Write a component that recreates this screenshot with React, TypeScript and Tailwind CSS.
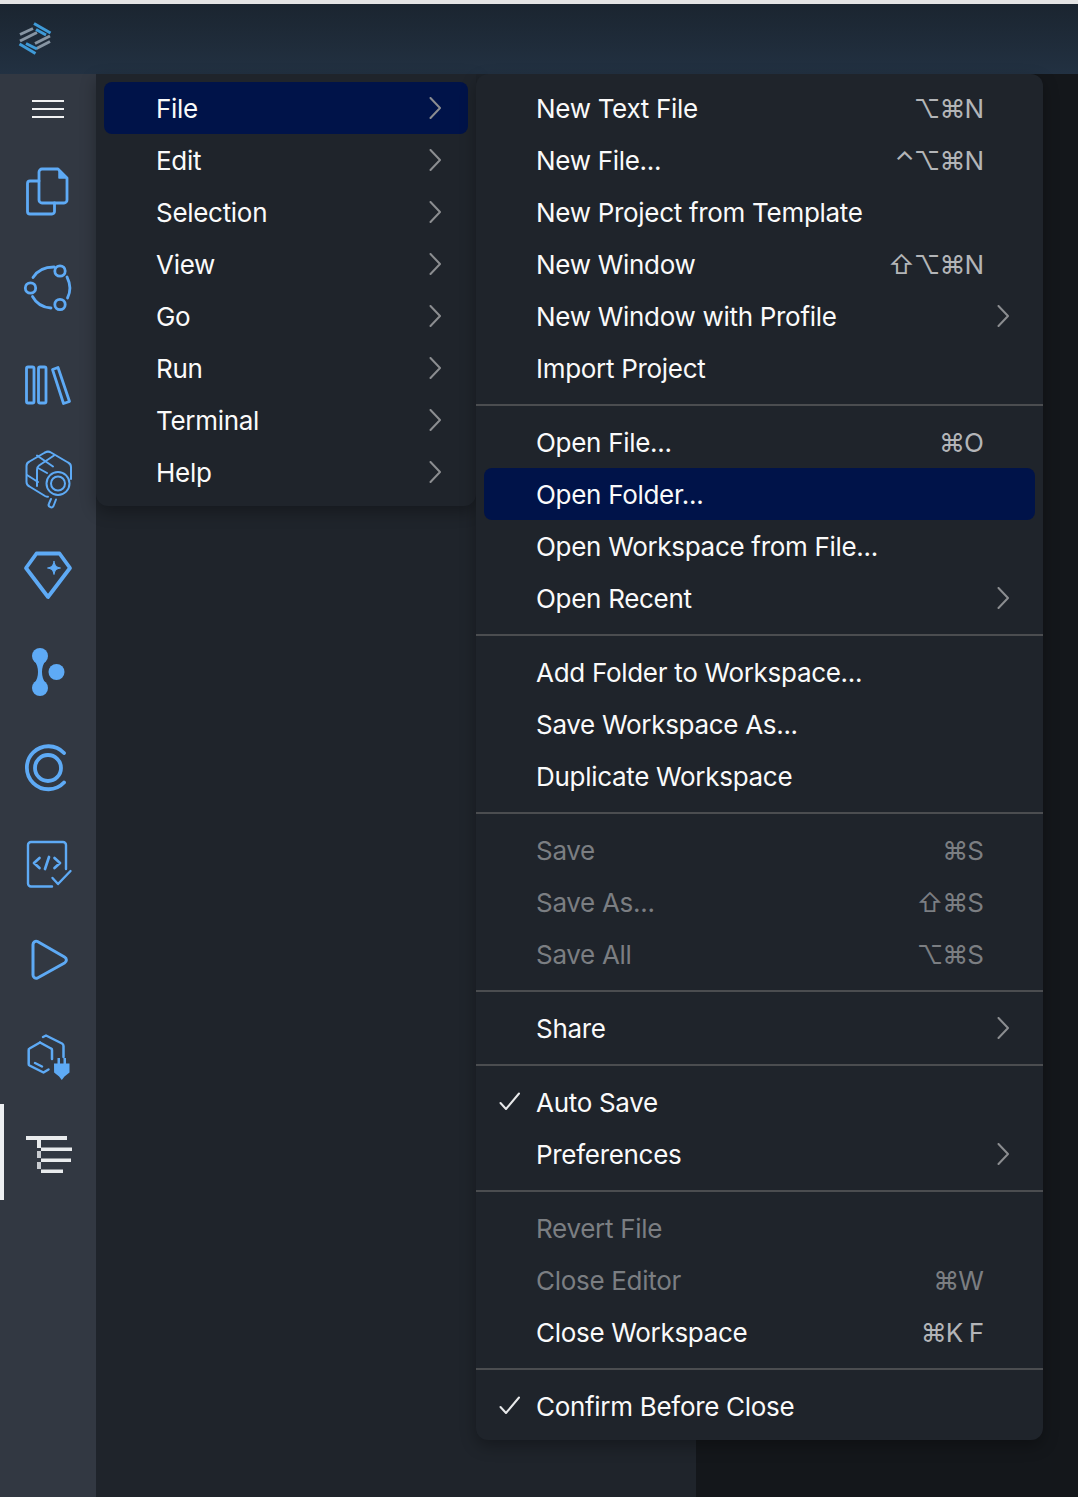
import React from "react";

const BLUE = "#5eaaf5";

function Ico({ y, children }: { y: number; children: React.ReactNode }) {
  return (
    <svg width="60" height="60" viewBox={`18 ${y - 30} 60 60`} fill="none" stroke={BLUE} strokeWidth="2.8" strokeLinecap="round" strokeLinejoin="round">
      {children}
    </svg>
  );
}

const icons: React.ReactNode[] = [
  <Ico y={192} key="f">
    <path d="M42 169h16l9 9v22a3 3 0 0 1-3 3H42a3 3 0 0 1-3-3v-28a3 3 0 0 1 3-3z" />
    <path d="M59 170v8h8z" fill={BLUE} strokeWidth="1.500" />
    <path d="M39 181h-9a2.500 2.500 0 0 0-2.500 2.500v28a2.500 2.500 0 0 0 2.500 2.500h22a2.500 2.500 0 0 0 2.500-2.500v-8.500" />
  </Ico>,
  <Ico y={288} key="c">
    <circle cx="60" cy="271" r="5.200" />
    <circle cx="30.500" cy="288" r="5.200" />
    <circle cx="60" cy="304.500" r="5.200" />
    <path d="M33 277.500C37 271 44 267 54 267" />
    <path d="M67 277C71 285 71 291 67.500 298" />
    <path d="M32.500 296.500C36 303 42 307.500 51 308" />
  </Ico>,
  <Ico y={384} key="l">
    <rect x="26.500" y="367" width="7.500" height="36" rx="1.500" />
    <rect x="38.500" y="367" width="7.500" height="36" rx="1.500" />
    <path d="M52.500 369.500l5.500-2 11.500 34-6 2z" />
  </Ico>,
  <Ico y={480} key="p">
    <g strokeWidth="2">
      <path d="M45 452.500a6 6 0 0 1 6 0l17 10a5 5 0 0 1 3 4.500v12" />
      <path d="M45 452.500l-15.500 9a5 5 0 0 0-3 4.500v16a5 5 0 0 0 3 4.500l15.500 9.500a6 6 0 0 0 3 .8" />
      <path d="M37 455.500l16 11" />
      <path d="M54 455.500l-15 10c-1.500 1-2 2.500-2 4.500v16" />
      <path d="M27 475l11 7" />
      <path d="M38 468l9 5" />
      <circle cx="58" cy="483.500" r="11.500" />
      <circle cx="58" cy="483.500" r="7" />
      <path d="M51 499l-2 4.500a2.500 2.500 0 0 0 4.500 2.500l2.500-6.500" />
    </g>
  </Ico>,
  <Ico y={576} key="d">
    <path d="M36.500 553.500h23l10.500 14.500-22 29-22-29z" strokeWidth="3.800" />
    <path d="M54 561.500c.8 4.200 2.300 5.700 6.500 6.500-4.200.8-5.700 2.300-6.500 6.500-.8-4.200-2.300-5.700-6.500-6.500 4.200-.8 5.700-2.300 6.500-6.500z" fill={BLUE} strokeWidth="1" />
  </Ico>,
  <Ico y={672} key="g">
    <g fill={BLUE} stroke="none">
      <circle cx="40" cy="656" r="8" />
      <circle cx="40" cy="688" r="8" />
      <circle cx="56.500" cy="672" r="8" />
      <path d="M34 660c3 4 4 8 4 12s-1 8-4 12h12c-3-4-4-8-4-12s1-8 4-12z" />
    </g>
  </Ico>,
  <Ico y={768} key="t">
    <g strokeWidth="3.800">
      <path d="M64 753a21.500 21.500 0 1 0 0 29.500" />
      <circle cx="48" cy="768" r="13" />
    </g>
  </Ico>,
  <Ico y={864} key="k">
    <path d="M52 886.500H31a3 3 0 0 1-3-3V845a3 3 0 0 1 3-3h32a3 3 0 0 1 3 3v24" strokeWidth="2.400" />
    <path d="M39.500 858l-5.500 5 5.500 5M54.500 858l5.500 5-5.500 5M49 857l-4 12" strokeWidth="2.700" />
    <path d="M52.500 878l5.500 6 12.500-13" strokeWidth="2.400" />
  </Ico>,
  <Ico y={960} key="r">
    <path d="M33 944.500c0-2.500 2.500-4 4.500-3l27 15.500c2.500 1.500 2.500 4.500 0 6l-27 15c-2 1-4.500-.5-4.500-3z" strokeWidth="3" />
  </Ico>,
  <Ico y={1056} key="e">
    <g strokeWidth="2.500">
      <path d="M43 1037l3-1.500 16 8a3 3 0 0 1 1.500 2.500v11" />
      <path d="M40 1042.500l-10.500 6a1.500 1.500 0 0 0-.8 1.500v14a1.500 1.500 0 0 0 .8 1.500l14 7 5-3" />
      <path d="M40 1042.500l11 6a1.500 1.500 0 0 1 1 1.500v9" />
      <path d="M35 1063l7 3.500" />
    </g>
    <g fill={BLUE} stroke="none">
      <rect x="57.500" y="1058" width="2.500" height="7" />
      <rect x="63.500" y="1058" width="2.500" height="7" />
      <path d="M54 1063.500h15.500v9l-5 4-2.700 3.500-2.700-3.500-5-4z" />
    </g>
  </Ico>,
];

function Tree() {
  return (
    <svg width="60" height="60" viewBox="18 1122 60 60" fill="#e9ebed">
      <rect x="26" y="1136" width="41" height="4" />
      <rect x="37" y="1140" width="4" height="8" />
      <rect x="37" y="1151" width="4" height="7" fill="#c9ccd0" />
      <rect x="37" y="1162" width="4" height="7" fill="#c9ccd0" />
      <rect x="41" y="1147.500" width="31" height="3.500" />
      <rect x="41" y="1158.500" width="30" height="3.500" />
      <rect x="41" y="1169.500" width="22" height="3.500" />
    </svg>
  );
}

function Logo() {
  return (
    <svg width="34" height="36" viewBox="18 20 34 36" fill="none" strokeWidth="3">
      <g stroke="#8795a3">
        <path d="M20 33.500L33 27.500" />
        <path d="M20 40L37 31.500" />
        <path d="M35 42.500L50 35" />
        <path d="M36.500 47.500L50 40.500" />
      </g>
      <g stroke="#3f9bd8">
        <path d="M34 22.500L50.500 32" />
        <path d="M36 28.500L46 34" />
        <path d="M19.500 43L35.500 52.500" />
        <path d="M26 42.500L37 48" />
      </g>
    </svg>
  );
}

function Chevron({ tone = "#8b8d90" }: { tone?: string }) {
  return (
    <svg width="12" height="22" viewBox="0 0 12 22" fill="none" stroke={tone} strokeWidth="2" strokeLinecap="round" strokeLinejoin="round">
      <path d="M1.500 1l9.500 10-9.500 10" />
    </svg>
  );
}

function Check() {
  return (
    <svg width="22" height="20" viewBox="0 0 22 20" fill="none" stroke="#e8e9ea" strokeWidth="2" strokeLinecap="round" strokeLinejoin="round" className="absolute left-[15px] top-[16px]">
      <path d="M1.500 11l5.500 6L20 1.500" />
    </svg>
  );
}

type Item = { label: string; kbd?: string; sub?: boolean; off?: boolean; on?: boolean; chk?: boolean };

const groups: Item[][] = [
  [
    { label: "New Text File", kbd: "⌥⌘N" },
    { label: "New File...", kbd: "⌃⌥⌘N" },
    { label: "New Project from Template" },
    { label: "New Window", kbd: "⇧⌥⌘N" },
    { label: "New Window with Profile", sub: true },
    { label: "Import Project" },
  ],
  [
    { label: "Open File...", kbd: "⌘O" },
    { label: "Open Folder...", on: true },
    { label: "Open Workspace from File..." },
    { label: "Open Recent", sub: true },
  ],
  [{ label: "Add Folder to Workspace..." }, { label: "Save Workspace As..." }, { label: "Duplicate Workspace" }],
  [
    { label: "Save", kbd: "⌘S", off: true },
    { label: "Save As...", kbd: "⇧⌘S", off: true },
    { label: "Save All", kbd: "⌥⌘S", off: true },
  ],
  [{ label: "Share", sub: true }],
  [{ label: "Auto Save", chk: true }, { label: "Preferences", sub: true }],
  [
    { label: "Revert File", off: true },
    { label: "Close Editor", kbd: "⌘W", off: true },
    { label: "Close Workspace", kbd: "⌘K F" },
  ],
  [{ label: "Confirm Before Close", chk: true }],
];

const top = ["File", "Edit", "Selection", "View", "Go", "Run", "Terminal", "Help"];

export default function App() {
  return (
    <div className="relative flex h-[1497px] w-[1078px] flex-col overflow-hidden bg-[#14171b] font-['Inter',sans-serif] text-[26px] tracking-[-0.3px] text-[#fafafa]">
      <div className="h-[4px] bg-[#e4e4e4]" />
      <div className="flex h-[70px] items-center bg-gradient-to-b from-[#1b2530] to-[#223142] pl-[18px]">
        <Logo />
      </div>
      <div className="flex flex-1">
        <div className="relative flex w-[96px] flex-col items-center bg-[#323842]">
          <div className="flex h-[70px] w-full flex-col items-center justify-center gap-[6px]">
            <div className="h-[2px] w-[32px] bg-[#f0f1f2]" />
            <div className="h-[2px] w-[32px] bg-[#f0f1f2]" />
            <div className="h-[2px] w-[32px] bg-[#f0f1f2]" />
          </div>
          {icons.map((ic, i) => (
            <div key={i} className="flex h-[96px] w-full items-center justify-center">
              {ic}
            </div>
          ))}
          <div className="flex h-[96px] w-full items-center justify-center border-l-4 border-[#eef0f2] pr-[4px]">
            <Tree />
          </div>
        </div>
        <div className="w-[600px] bg-[#1f242b]" />
        <div className="flex-1" />
      </div>

      <div className="absolute left-[96px] top-[74px] w-[380px] rounded-b-[12px] bg-[#1f242b] p-[8px] shadow-[0_6px_16px_rgba(0,0,0,0.3)]">
        {top.map((t, i) => (
          <div key={t} className={`flex h-[52px] items-center justify-between rounded-[8px] pl-[52px] pr-[27px] ${i === 0 ? "bg-[#001349]" : ""}`}>
            <span>{t}</span>
            <Chevron />
          </div>
        ))}
      </div>

      <div className="absolute left-[476px] top-[74px] w-[567px] rounded-[12px] bg-[#1f242b] py-[8px] shadow-[0_6px_16px_rgba(0,0,0,0.3)]">
        {groups.map((g, gi) => (
          <div key={gi}>
            {gi > 0 && <div className="my-[10px] h-[2px] bg-[#4b4d50]" />}
            {g.map((it) => (
              <div key={it.label} className={`relative mx-[8px] flex h-[52px] items-center justify-between rounded-[8px] pl-[52px] ${it.sub ? "pr-[26px]" : "pr-[52px]"} ${it.on ? "bg-[#001349]" : ""}`}>
                {it.chk && <Check />}
                <span className={it.off ? "text-[#7b7e82]" : ""}>{it.label}</span>
                {it.kbd && <span className={`font-['Inter','DejaVu_Sans',sans-serif] tracking-[-1px] ${it.off ? "text-[#7b7e82]" : "text-[#b3b5b8]"}`}>{it.kbd}</span>}
                {it.sub && <Chevron />}
              </div>
            ))}
          </div>
        ))}
      </div>
    </div>
  );
}
